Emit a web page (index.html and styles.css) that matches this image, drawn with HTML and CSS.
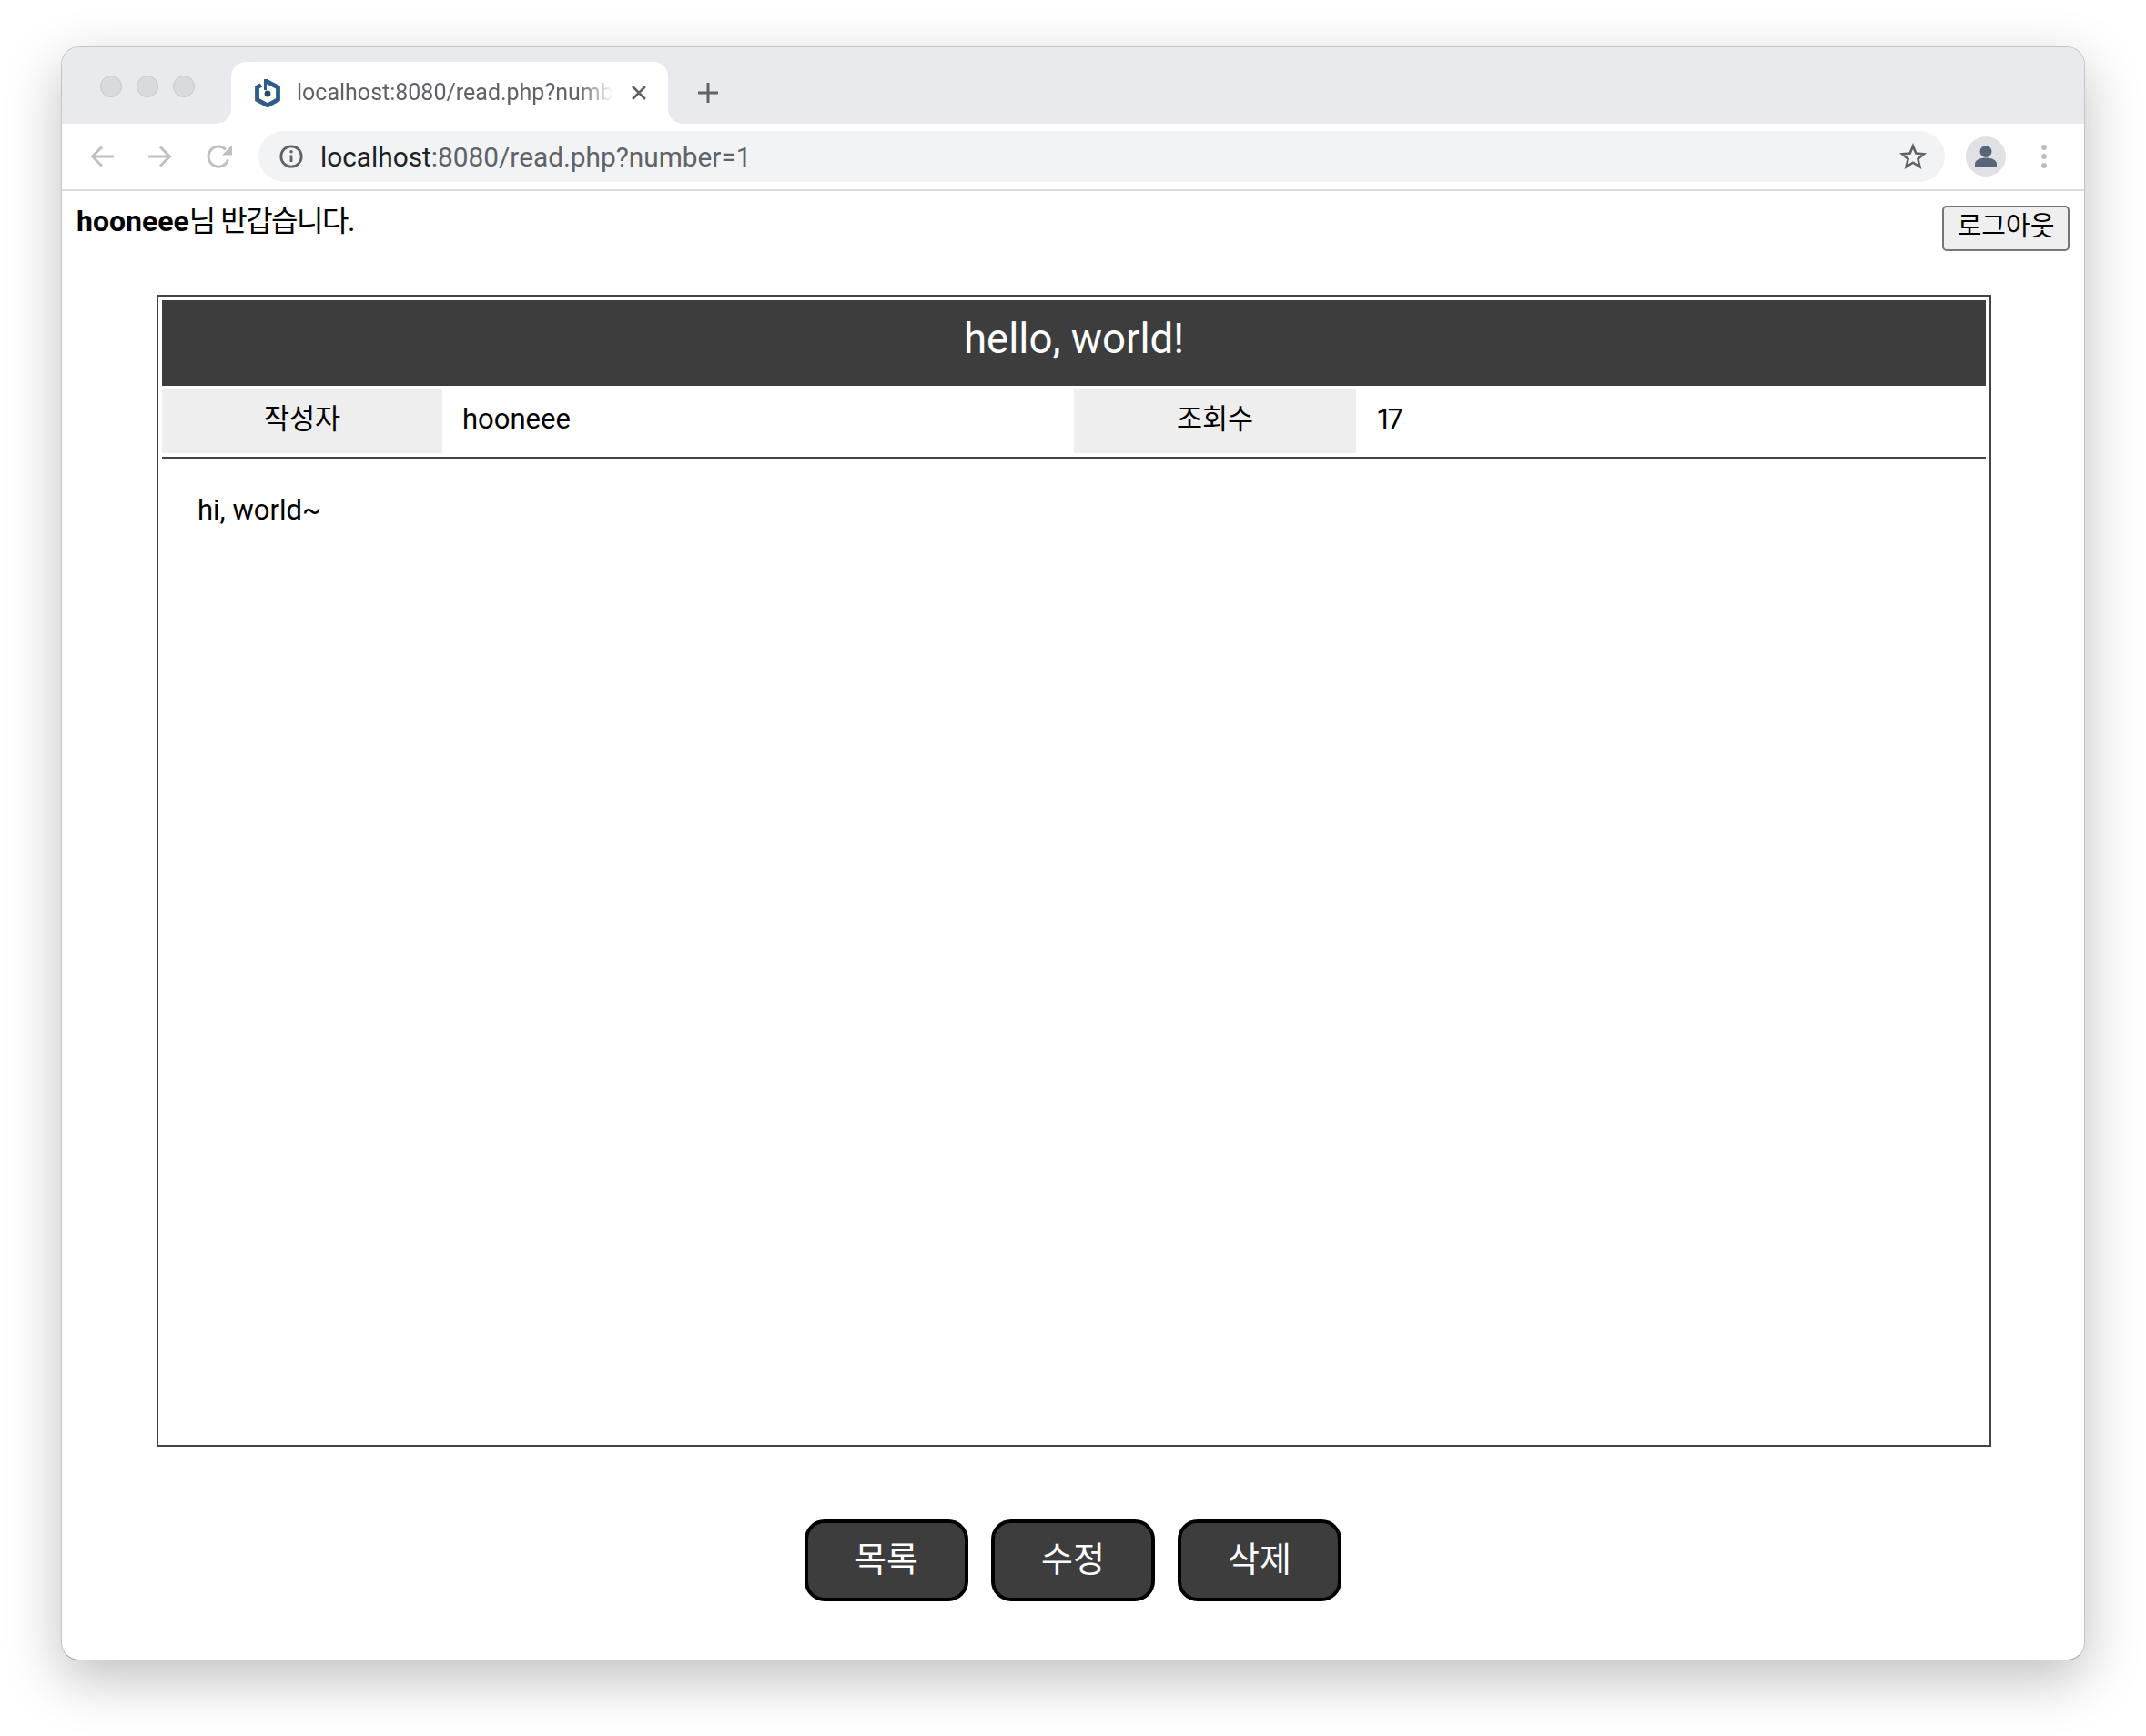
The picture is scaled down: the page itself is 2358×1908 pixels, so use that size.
FILE: index.html
```html
<!DOCTYPE html>
<html lang="ko">
<head>
<meta charset="utf-8">
<title>hello, world!</title>
<link rel="stylesheet" href="styles.css">
</head>
<body>
<div class="window">
  <div class="tabstrip">
    <div class="lights"><span class="light"></span><span class="light"></span><span class="light"></span></div>
    <div class="tab">
      <svg class="favicon" viewBox="0 0 28 32"><path d="M12 3 25.500 10V23.500L14 29.800 2.500 23.500V10L7 7.500" fill="none" stroke="#2e5c88" stroke-width="4.800"/><path d="M11.500 1v12" fill="none" stroke="#2e5c88" stroke-width="3"/><circle cx="14" cy="17" r="3.400" fill="#234a70"/></svg>
      <span class="tab-title">localhost:8080/read.php?number=1</span>
      <svg class="tab-close" viewBox="0 0 18 18"><path d="M2 2l14 14M16 2L2 16" stroke="#5f6368" stroke-width="2.600" fill="none"/></svg>
    </div>
    <svg class="newtab" viewBox="0 0 24 24"><path d="M12 1v22M1 12h22" stroke="#5f6368" stroke-width="3" fill="none"/></svg>
  </div>
  <div class="toolbar">
    <svg class="nav" viewBox="0 0 28 28"><path d="M27 14H3.500M14 3.500 3.500 14 14 24.500" stroke="#c0c0c0" stroke-width="3" fill="none"/></svg>
    <svg class="nav" viewBox="0 0 28 28"><path d="M1 14h23.500M14 3.500 24.500 14 14 24.500" stroke="#c0c0c0" stroke-width="3" fill="none"/></svg>
    <svg class="nav nav-reload" viewBox="0 0 30 28"><path d="M24.500 17.500A11 11 0 1 1 22 6.500" stroke="#c0c0c0" stroke-width="3" fill="none"/><path d="M29 1.500V12.500H18z" fill="#c0c0c0"/></svg>
    <div class="omnibox">
      <svg class="info" viewBox="0 0 26 26"><circle cx="13" cy="13" r="11.200" stroke="#5f6368" stroke-width="2.800" fill="none"/><path d="M13 11.500v7.500" stroke="#5f6368" stroke-width="2.800"/><circle cx="13" cy="7.800" r="1.700" fill="#5f6368"/></svg>
      <span class="url"><span class="host">localhost</span>:8080/read.php?number=1</span>
      <svg class="star" viewBox="0 0 30 30"><path d="M15 3.500l3.300 8 8.700.7-6.600 5.600 2 8.500L15 21.700l-7.400 4.600 2-8.500L3 12.200l8.700-.7z" stroke="#5f6368" stroke-width="2.600" fill="none"/></svg>
    </div>
    <div class="avatar"><svg viewBox="0 0 44 44"><circle cx="22" cy="16.500" r="6.500" fill="#5a6478"/><path d="M10 34v-4c0-4.500 7-6.500 12-6.500S34 25.500 34 30v4z" fill="#5a6478"/></svg></div>
    <div class="kebab"><span class="dot"></span><span class="dot"></span><span class="dot"></span></div>
  </div>
  <main class="page">
    <div class="userbar">
      <p class="greeting"><strong>hooneee</strong>님 반갑습니다.</p>
      <button class="logout">로그아웃</button>
    </div>
    <article class="post">
      <h1 class="post-title">hello, world!</h1>
      <div class="label">작성자</div>
      <div class="value">hooneee</div>
      <div class="label">조회수</div>
      <div class="value value-count">17</div>
      <div class="rule"></div>
      <div class="post-body">hi, world~</div>
    </article>
    <div class="actions">
      <button class="action">목록</button>
      <button class="action">수정</button>
      <button class="action">삭제</button>
    </div>
  </main>
</div>
</body>
</html>
```
FILE: styles.css
```css
* { box-sizing: border-box; }
html, body { margin: 0; height: 100%; background: #fff; }
body {
  padding: 51px 67px 0;
  font-family: Roboto, "Noto Sans CJK KR", sans-serif;
  color: #000;
  overflow: hidden;
}
.window {
  width: 2224px;
  height: 1774px;
  border: 1px solid #c4c4c4;
  border-bottom-color: #aaa;
  border-radius: 20px;
  background: #fff;
  box-shadow: 0 20px 60px rgba(0, 0, 0, .25);
  overflow: clip;
  display: flex;
  flex-direction: column;
}
.tabstrip {
  height: 84px;
  flex: none;
  background: #e8eaed;
  display: flex;
  align-items: flex-end;
}
.lights {
  display: flex;
  gap: 16px;
  width: 186px;
  padding: 0 0 29px 42px;
  align-self: flex-end;
}
.light {
  width: 24px;
  height: 24px;
  border-radius: 50%;
  background: #d9dadc;
  border: 1px solid #c8c9cb;
}
.tab {
  position: relative;
  width: 480px;
  height: 68px;
  background: #fff;
  border-radius: 16px 16px 0 0;
  display: flex;
  align-items: center;
  padding: 0 22px 0 26px;
}
.tab::before, .tab::after {
  content: "";
  position: absolute;
  bottom: 0;
  width: 16px;
  height: 16px;
}
.tab::before { left: -16px; background: radial-gradient(circle at 0 0, #e8eaed 15.500px, #fff 16px); }
.tab::after { right: -16px; background: radial-gradient(circle at 100% 0, #e8eaed 15.500px, #fff 16px); }
.favicon { width: 28px; height: 32px; flex: none; }
.tab-title {
  margin-left: 18px;
  width: 350px;
  height: 36px;
  line-height: 36px;
  flex: none;
  font-size: 25px;
  color: #5f6368;
  white-space: nowrap;
  overflow: hidden;
  -webkit-mask-image: linear-gradient(to right, #000 310px, transparent 348px);
  mask-image: linear-gradient(to right, #000 310px, transparent 348px);
}
.tab-close { width: 18px; height: 18px; flex: none; margin-left: 17px; }
.newtab { width: 24px; height: 24px; margin: 0 0 22px 32px; flex: none; }
.toolbar {
  height: 74px;
  flex: none;
  border-bottom: 2px solid #dadce0;
  display: flex;
  align-items: center;
  padding: 0 0 0 30px;
}
.nav { width: 28px; height: 28px; flex: none; margin-right: 36px; }
.nav-reload { width: 30px; }
.omnibox {
  width: 1853px;
  height: 56px;
  margin-left: -8px;
  flex: none;
  border-radius: 28px;
  background: #f1f3f4;
  display: flex;
  align-items: center;
  padding: 0 20px 0 23px;
}
.info { width: 26px; height: 26px; flex: none; }
.url { margin-left: 19px; font-size: 29.800px; color: #5f6368; flex: 1; white-space: nowrap; }
.host { color: #202124; }
.star { width: 30px; height: 30px; flex: none; }
.avatar {
  width: 44px;
  height: 44px;
  margin-left: 23px;
  flex: none;
  border-radius: 50%;
  background: #dfe1e5;
}
.avatar svg { display: block; width: 44px; height: 44px; }
.kebab {
  display: flex;
  flex-direction: column;
  gap: 4px;
  margin-left: 39px;
}
.dot { width: 6px; height: 6px; border-radius: 50%; background: #bdbdbd; }
.page { flex: 1; display: flex; flex-direction: column; padding: 0 16px; }
.userbar { display: flex; justify-content: space-between; align-items: flex-start; padding-top: 15px; height: 114px; }
.greeting { margin: 0; font-size: 32px; line-height: 36px; letter-spacing: -1.500px; }
.greeting strong { font-weight: 700; letter-spacing: 0; }
.logout {
  width: 140px;
  height: 50px;
  margin-top: 1px;
  padding: 0 0 3px;
  font: inherit;
  font-size: 29px;
  line-height: 1;
  letter-spacing: 0;
  color: #000;
  background: #efefef;
  border: 2px solid #767676;
  border-radius: 5px;
}
.post {
  margin: 0 88px;
  width: 2016px;
  height: 1266px;
  border: 2px solid #444;
  padding: 4px;
  display: grid;
  grid-template-columns: 308px 686px 310px 1fr;
  grid-template-rows: 94px 70px 2px 1fr;
  gap: 4px;
}
.post-title {
  grid-column: 1 / -1;
  margin: 0;
  background: #3d3d3d;
  color: #fff;
  font-size: 45.600px;
  font-weight: 400;
  line-height: 86px;
  text-align: center;
}
.label {
  background: #eee;
  font-size: 30.500px;
  line-height: 65px;
  text-align: center;
}
.value { font-size: 31px; line-height: 65px; padding-left: 18px; }
.value-count { letter-spacing: -5px; }
.rule { grid-column: 1 / -1; background: #444; }
.post-body { grid-column: 1 / -1; font-size: 31px; padding: 33px 39px; line-height: 40px; }
.actions { display: flex; justify-content: center; gap: 25px; margin-top: 80px; }
.action {
  width: 180px;
  height: 90px;
  padding: 0 0 9px;
  font: inherit;
  font-size: 38px;
  color: #fff;
  background: #3d3d3d;
  border: 4px solid #000;
  border-radius: 22px;
}
```
